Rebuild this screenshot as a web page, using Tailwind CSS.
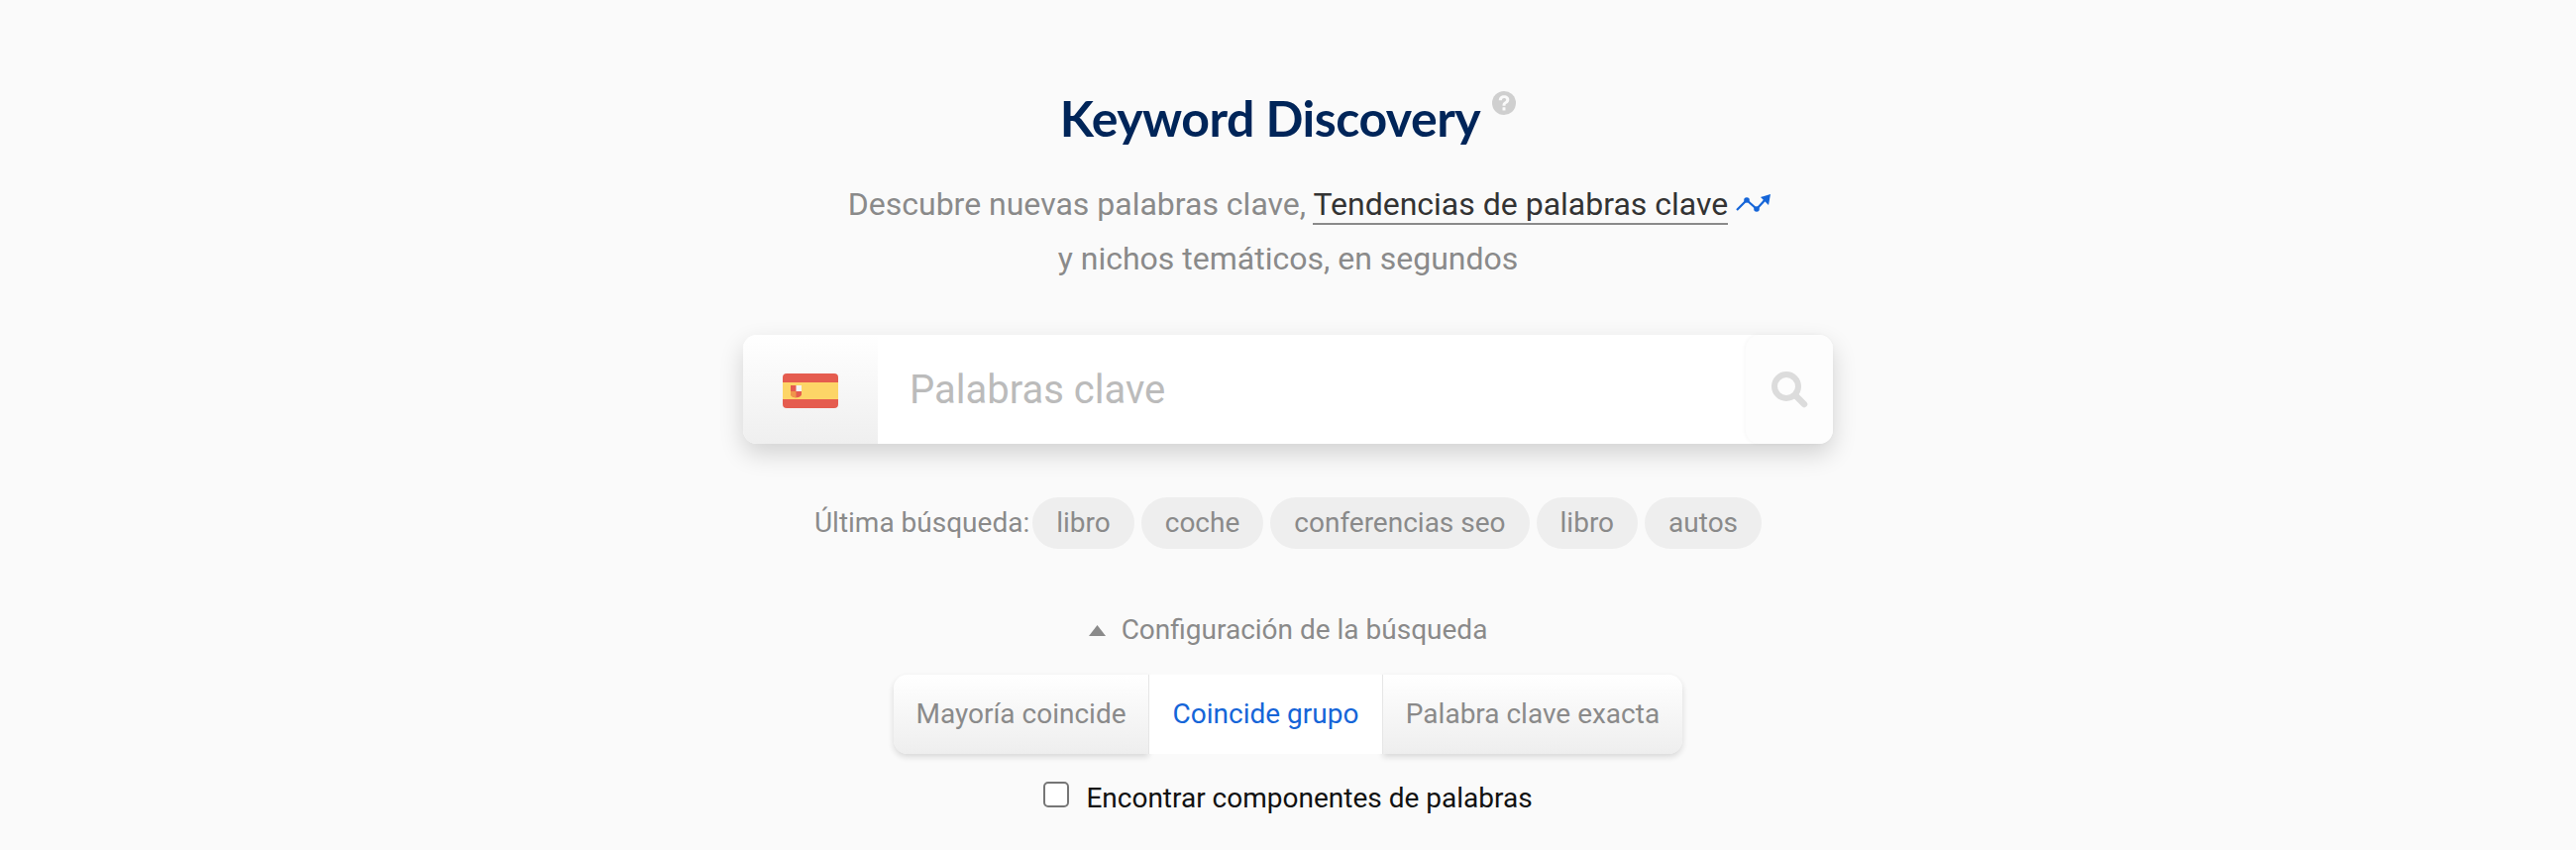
<!DOCTYPE html>
<html lang="es">
<head>
  <meta charset="UTF-8" />
  <title>Keyword Discovery</title>
  <script src="https://cdn.jsdelivr.net/npm/@tailwindcss/browser@4"></script>
</head>
<body class="bg-[#fafafa] h-[858px] overflow-hidden font-['Roboto',sans-serif]">
  <div class="flex flex-col items-center">
    <!-- title -->
    <div class="mt-[86px] h-[66px] flex items-start gap-[12px]">
      <h1 class="font-['Lato',sans-serif] font-bold text-[50px] leading-[66px] text-[#002559] tracking-[-0.5px]">Keyword Discovery</h1>
      <svg class="mt-[6px] w-[24px] h-[24px]" viewBox="0 0 24 24">
        <circle cx="12" cy="12" r="12" fill="#cfcfcf" />
        <path d="M6.800 9.200c0-3 2.300-4.900 5.300-4.900 3 0 5.200 1.700 5.200 4.400 0 2-1.100 3-2.500 3.900-1 .6-1.300 1-1.300 2.100h-3c0-2.100.6-3 2-3.900 1-.6 1.700-1.100 1.700-2 0-1-.9-1.700-2.100-1.700-1.300 0-2.100.8-2.200 2.100z" fill="#fafafa" />
        <rect x="10.500" y="16.200" width="3" height="3.200" rx=".5" fill="#fafafa" />
      </svg>
    </div>

    <!-- subtitle -->
    <p class="mt-[27px] text-[32px] leading-[55px] text-[#8a8a8a] text-center">
      Descubre nuevas palabras clave,
      <a class="relative text-[#333] border-b-2 border-[#8a8a8a]">Tendencias de palabras clave<svg class="absolute left-[calc(100%+6px)] top-[5px] w-[40px] h-[24px]" viewBox="20 12 40 24" fill="none">
        <path d="M23 32 L33 22 L43 31 L53 20" stroke="#1565d8" stroke-width="2.200" />
        <circle cx="33" cy="22" r="2.800" fill="#1565d8" />
        <circle cx="43" cy="31" r="2.800" fill="#1565d8" />
        <path d="M47 19 L57 16 L55 27 Z" fill="#1565d8" />
      </svg></a>
      <br />
      y nichos temáticos, en segundos
    </p>

    <!-- search box -->
    <div class="mt-[49px] w-[1100px] h-[110px] flex bg-white rounded-[14px] shadow-[0_10px_24px_rgba(0,0,0,0.16)]">
      <div class="w-[136px] pt-[2px] rounded-l-[14px] bg-gradient-to-b from-white to-[#efefef] flex items-center justify-center">
        <svg class="w-[56px] h-[35px]" viewBox="0 0 56 35">
          <rect width="56" height="35" rx="4" fill="#e55c4f" />
          <rect y="9" width="56" height="17" fill="#fdd567" />
          <path d="M8 12h11v8.500c0 2.600-2.400 3.800-5.500 3.800S8 23.100 8 20.500z" fill="#e55c4f" />
          <rect x="13.500" y="12" width="5.500" height="6" fill="#f4f4f4" />
          <path d="M8 18h5.500v6.300C10.400 24.300 8 23.100 8 20.500z" fill="#f0954a" />
        </svg>
      </div>
      <input class="flex-1 min-w-0 pl-[32px] pt-[2px] text-[40px] outline-none placeholder:text-[#bbbbbb]" placeholder="Palabras clave" />
      <button class="w-[88px] rounded-[14px] bg-[#fdfdfd] shadow-[-1px_0_4px_rgba(0,0,0,0.04)] flex items-center justify-center">
        <svg class="w-[38px] h-[38px]" viewBox="0 0 38 38" fill="none">
          <circle cx="16" cy="16" r="12" stroke="#dcdcdc" stroke-width="6" />
          <path d="M25 25 L34 34" stroke="#dcdcdc" stroke-width="6.500" stroke-linecap="round" />
        </svg>
      </button>
    </div>

    <!-- last searches -->
    <div class="mt-[54px] flex items-center text-[28px] text-[#8a8a8a]">
      <span class="mr-[3px]">Última búsqueda:</span>
      <div class="flex gap-[7px]">
        <span class="h-[52px] px-[24px] rounded-full bg-[#eeeeee] flex items-center">libro</span>
        <span class="h-[52px] px-[24px] rounded-full bg-[#eeeeee] flex items-center">coche</span>
        <span class="h-[52px] px-[24px] rounded-full bg-[#eeeeee] flex items-center">conferencias seo</span>
        <span class="h-[52px] px-[24px] rounded-full bg-[#eeeeee] flex items-center">libro</span>
        <span class="h-[52px] px-[24px] rounded-full bg-[#eeeeee] flex items-center">autos</span>
      </div>
    </div>

    <!-- settings toggle -->
    <div class="mt-[62px] h-[40px] flex items-center gap-[16px] text-[28px] text-[#8a8a8a]">
      <svg class="w-[17px] h-[11px]" viewBox="0 0 17 11"><path d="M8.500 0 L17 11 H0 Z" fill="#8a8a8a" /></svg>
      <span>Configuración de la búsqueda</span>
    </div>

    <!-- match type tabs -->
    <div class="mt-[25px] h-[80px] flex text-[28px] text-[#8a8a8a]">
      <div class="w-[257px] rounded-l-[14px] bg-gradient-to-b from-white to-[#eeeeee] shadow-[0_3px_6px_rgba(0,0,0,0.14)] flex items-center justify-center">Mayoría coincide</div>
      <div class="z-10 w-[237px] bg-white border-x border-[#e6e6e6] text-[#1565d8] flex items-center justify-center">Coincide grupo</div>
      <div class="w-[302px] rounded-r-[14px] bg-gradient-to-b from-white to-[#eeeeee] shadow-[0_3px_6px_rgba(0,0,0,0.14)] flex items-center justify-center">Palabra clave exacta</div>
    </div>

    <!-- word components -->
    <label class="mt-[29px] flex items-center gap-[17px] text-[28px] leading-[32px] text-[#111]">
      <input type="checkbox" class="w-[26px] h-[26px] -mt-[8px] appearance-none bg-white border-2 border-[#767676] rounded-[5px]" />
      <span>Encontrar componentes de palabras</span>
    </label>
  </div>
</body>
</html>
